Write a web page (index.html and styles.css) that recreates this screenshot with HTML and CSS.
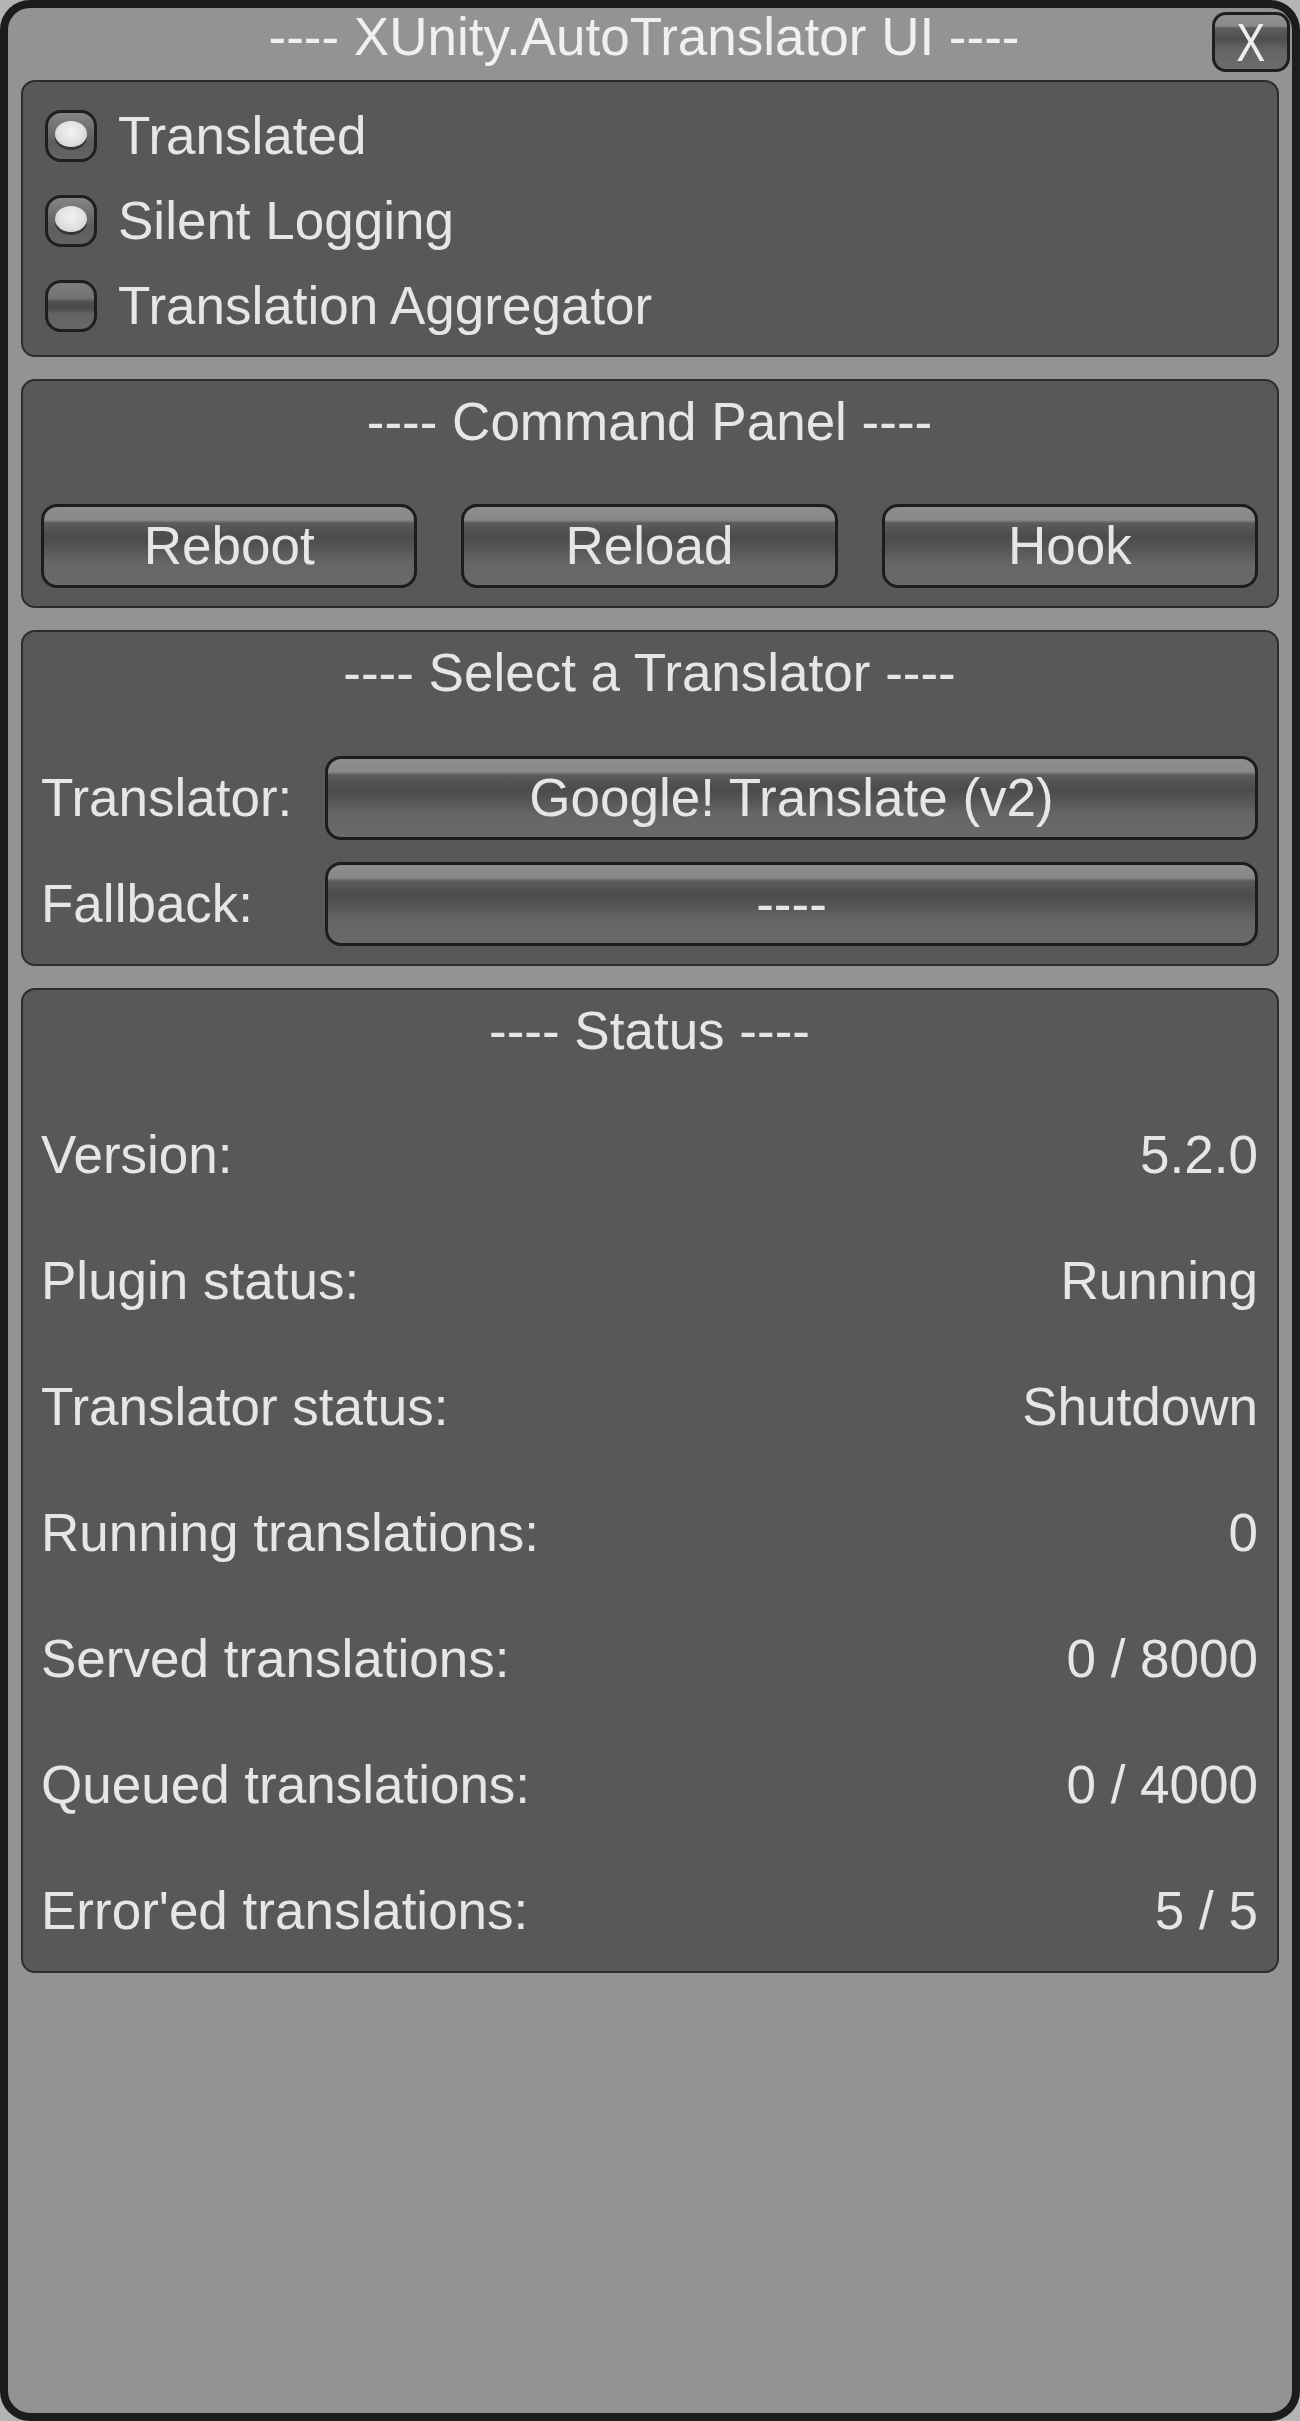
FILE: index.html
```html
<!DOCTYPE html>
<html>
<head>
<meta charset="utf-8">
<link rel="stylesheet" href="styles.css">
</head>
<body>
<div class="window">
  <div class="titlebar">
    <div class="title">---- XUnity.AutoTranslator UI ----</div>
    <div class="close-btn"><span class="close-glyph">X</span></div>
  </div>
  <div class="panels">
    <section class="panel toggles">
      <div class="toggle-row"><span class="toggle on"><span class="dot"></span></span><span class="label">Translated</span></div>
      <div class="toggle-row"><span class="toggle on"><span class="dot"></span></span><span class="label">Silent Logging</span></div>
      <div class="toggle-row"><span class="toggle"></span><span class="label">Translation Aggregator</span></div>
    </section>

    <section class="panel command">
      <div class="panel-header">---- Command Panel ----</div>
      <div class="btn-row">
        <div class="btn">Reboot</div>
        <div class="btn">Reload</div>
        <div class="btn">Hook</div>
      </div>
    </section>

    <section class="panel selector">
      <div class="panel-header">---- Select a Translator ----</div>
      <div class="select-rows">
        <div class="select-row"><span class="select-label">Translator:</span><div class="btn wide">Google! Translate (v2)</div></div>
        <div class="select-row"><span class="select-label">Fallback:</span><div class="btn wide">----</div></div>
      </div>
    </section>

    <section class="panel status">
      <div class="panel-header">---- Status ----</div>
      <div class="status-rows">
        <div class="status-row"><span>Version:</span><span>5.2.0</span></div>
        <div class="status-row"><span>Plugin status:</span><span>Running</span></div>
        <div class="status-row"><span>Translator status:</span><span>Shutdown</span></div>
        <div class="status-row"><span>Running translations:</span><span>0</span></div>
        <div class="status-row"><span>Served translations:</span><span>0 / 8000</span></div>
        <div class="status-row"><span>Queued translations:</span><span>0 / 4000</span></div>
        <div class="status-row"><span>Error'ed translations:</span><span>5 / 5</span></div>
      </div>
    </section>
  </div>
</div>
</body>
</html>
```

FILE: styles.css
```css
html, body {
  margin: 0;
  padding: 0;
  background: #b4b4b4;
}

body {
  width: 1300px;
  height: 2421px;
  font-family: "Liberation Sans", Arial, sans-serif;
  font-size: 53px;
  color: #e6e6e6;
}

.window {
  box-sizing: border-box;
  width: 1300px;
  height: 2421px;
  border: 8px solid #1c1c1c;
  border-radius: 30px;
  background: #939393;
  padding: 0 13px;
}

.titlebar {
  height: 72px;
  display: grid;
  grid-template-columns: 1fr auto 1fr;
}

.title {
  grid-column: 2;
  line-height: 58px;
  white-space: nowrap;
  color: #f0f0f0;
  margin-left: -12px;
}

.close-btn {
  grid-column: 3;
  justify-self: end;
  box-sizing: border-box;
  width: 78px;
  height: 60px;
  margin-top: 4px;
  margin-right: -11px;
  border: 3px solid #1e1e1e;
  border-radius: 14px;
  background: linear-gradient(to bottom, #909090 0, #8a8a8a 11px, #5e5e5e 13px, #4e4e4e 24px, #646464 34px, #6c6c6c 100%);
  display: flex;
  align-items: center;
  justify-content: center;
  line-height: 1;
  color: #eeeeee;
}

.close-glyph {
  display: inline-block;
  transform: scaleX(0.82);
}

.panels {
  display: flex;
  flex-direction: column;
  gap: 22px;
}

.panel {
  background: #585858;
  border: 2px solid #2c2c2c;
  border-radius: 14px;
}

.panel-header {
  text-align: center;
  line-height: 58px;
  white-space: nowrap;
}

/* toggles */
.toggles {
  padding: 28px 22px 23px;
  display: flex;
  flex-direction: column;
  gap: 33px;
}

.toggle-row {
  display: flex;
  align-items: center;
  height: 52px;
  line-height: 52px;
  gap: 21px;
}

.toggle {
  box-sizing: border-box;
  flex: none;
  width: 52px;
  height: 52px;
  border: 3px solid #1e1e1e;
  border-radius: 16px;
  background: linear-gradient(to bottom, #7c7c7c 0, #747474 15px, #515151 19px, #4a4a4a 25px, #636363 31px, #686868 100%);
  display: flex;
  justify-content: center;
  align-items: flex-start;
}

.toggle.on {
  background: linear-gradient(to bottom, #858585 0, #727272 14px, #5e5e5e 30px, #646464 100%);
  padding-top: 8px;
}

.dot {
  width: 32px;
  height: 26px;
  border-radius: 50%;
  background: radial-gradient(ellipse at 50% 40%, #f2f2f2 0, #e0e0e0 55%, #bdbdbd 100%);
  box-shadow: 0 3px 0 #363636;
}

/* command buttons */
.command {
  padding: 12px 19px 18px 18px;
}

.btn-row {
  margin-top: 53px;
  display: grid;
  grid-template-columns: 1fr 1fr 1fr;
  gap: 44px;
}

.btn {
  box-sizing: border-box;
  height: 84px;
  border: 3px solid #1c1c1c;
  border-radius: 16px;
  background: linear-gradient(to bottom, #8e8e8e 0, #888888 13px, #5c5c5c 16px, #4b4b4b 30px, #565656 42px, #666666 56px, #6a6a6a 100%);
  display: flex;
  align-items: center;
  justify-content: center;
  line-height: 58px;
  white-space: nowrap;
}

/* selector */
.selector {
  padding: 12px 19px 18px 18px;
}

.select-rows {
  margin-top: 54px;
  display: flex;
  flex-direction: column;
  gap: 22px;
}

.select-row {
  display: flex;
  align-items: center;
}

.select-label {
  flex: none;
  width: 284px;
  line-height: 58px;
}

.btn.wide {
  flex: 1;
}

/* status */
.status {
  padding: 12px 19px 31px 18px;
}

.status-rows {
  margin-top: 66px;
  display: flex;
  flex-direction: column;
  gap: 68px;
}

.status-row {
  display: flex;
  justify-content: space-between;
  line-height: 58px;
  white-space: nowrap;
}
```
